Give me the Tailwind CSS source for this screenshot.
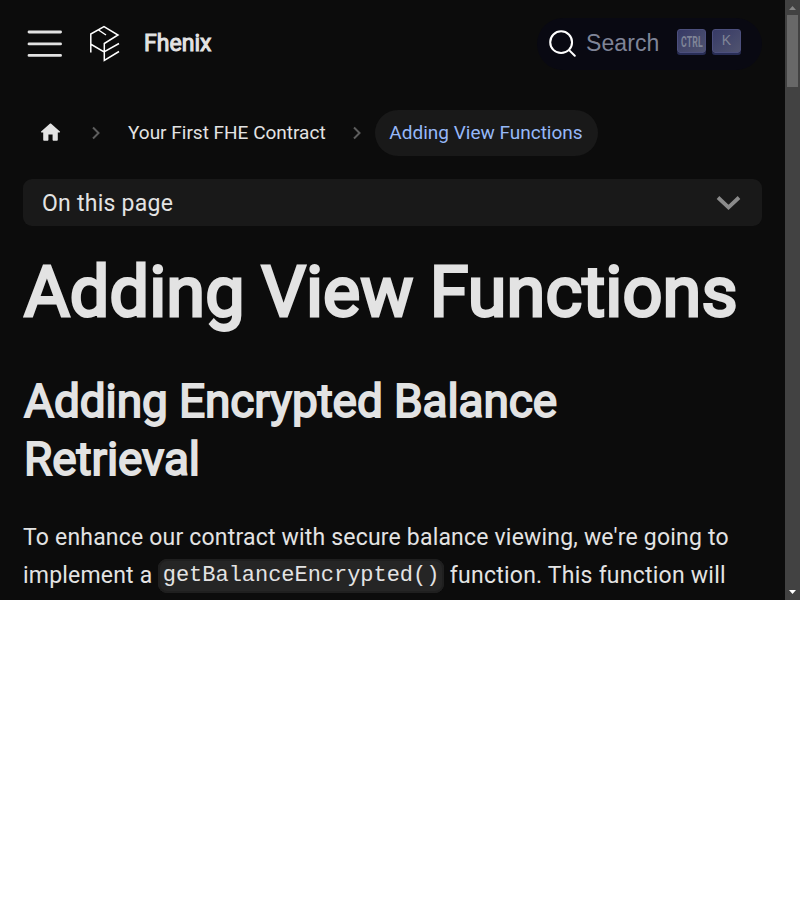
<!DOCTYPE html>
<html lang="en"><head><meta charset="utf-8"><title>Adding View Functions | Fhenix</title>
<script src="https://cdn.jsdelivr.net/npm/@tailwindcss/browser@4"></script></head>
<body class="bg-white font-[Roboto,sans-serif] text-[#e3e3e3]">
<div class="flex h-[600px] w-[800px] overflow-hidden bg-[#0c0c0c]">
 <div class="h-[600px] w-[785px] shrink-0 overflow-hidden">
  <nav class="flex h-[87px] items-center pl-[23px] pr-[23px]">
   <svg class="h-[43px] w-[43px] shrink-0" viewBox="0 0 30 30"><path stroke="#e3e3e3" stroke-linecap="round" stroke-miterlimit="10" stroke-width="2" d="M4.200 7h22M4.200 15.300h22M4.200 23.300h22"/></svg>
   <svg class="ml-[23px] h-[37px] w-[31px] shrink-0" viewBox="0 0 31 37" fill="none" stroke="#fff" stroke-width="1.5"><path d="M1.800 27.500V9L15 1.500L29 10L15.300 18.500V35.500L30 26.500M1.500 19L15 27L30 18.500M9.500 5L17 10"/></svg>
   <b class="ml-[24px] pt-[2px] text-[23px] font-normal tracking-[0.050px] [-webkit-text-stroke:1px_#e3e3e3]">Fhenix</b>
   <div class="ml-auto flex h-[52px] w-[225px] items-center rounded-full bg-[#090912] pl-[11px] font-['Liberation_Sans',sans-serif] text-[#7f8497]">
    <svg class="h-[29px] w-[29px]" viewBox="0 0 20 20" fill="none" stroke="#fff" stroke-width="1.4" stroke-linecap="round" stroke-linejoin="round"><path d="M14.386 14.386l4.088 4.088-4.088-4.088c-2.942 2.942-7.711 2.942-10.653 0s-2.942-7.711 0-10.653 7.711-2.942 10.653 0 2.942 7.711 0 10.653z"/></svg>
    <span class="ml-[9px] w-[73px] text-[23px] tracking-[0.1px]">Search</span>
    <span class="mb-[5px] ml-[18px] flex h-[24px] w-[29px] items-center justify-center rounded-[3px] border border-[#4c4f7d] bg-linear-to-br from-[#373a66] to-[#50536f] pt-[2px] shadow-[0_2px_0_#282d55]"><span class="inline-block scale-x-[0.58] font-[Roboto,sans-serif] text-[15px] leading-none font-bold tracking-[0.3px]">CTRL</span></span>
    <span class="mb-[5px] ml-[6px] flex h-[24px] w-[29px] items-center justify-center rounded-[3px] border border-[#4c4f7d] bg-linear-to-br from-[#373a66] to-[#50536f] pb-[1px] text-[14px] shadow-[0_2px_0_#282d55]">K</span>
   </div>
  </nav>
  <main class="px-[23px] pt-[23px]">
   <div class="flex h-[46px] items-center text-[19px]">
    <svg class="mb-[2px] ml-[15px] h-[25px] w-[25px]" viewBox="0 0 24 24"><path fill="#e3e3e3" d="M10 19v-5h4v5c0 .55.45 1 1 1h3c.55 0 1-.45 1-1v-7h1.700c.46 0 .68-.57.33-.87L12.670 3.600c-.38-.34-.96-.34-1.340 0l-8.360 7.530c-.34.3-.13.87.33.87H5v7c0 .55.45 1 1 1h3c.55 0 1-.45 1-1z"/></svg>
    <svg class="ml-[28px] h-[14px] w-[10px]" viewBox="0 0 10 14" fill="none" stroke="#5d5d5d" stroke-width="2"><path d="M2 1.500l5.500 5.500L2 12.500"/></svg>
    <span class="ml-[27px] w-[197px] whitespace-nowrap">Your First FHE Contract</span>
    <svg class="ml-[27px] h-[14px] w-[10px]" viewBox="0 0 10 14" fill="none" stroke="#5d5d5d" stroke-width="2"><path d="M2 1.500l5.500 5.500L2 12.500"/></svg>
    <span class="ml-auto mr-[164px] flex h-[46px] w-[223px] items-center justify-center whitespace-nowrap rounded-full bg-[#191919] pr-[1px] text-[#96b8f8]">Adding View Functions</span>
   </div>
   <div class="mt-[23px] flex h-[47px] items-center justify-between rounded-[9px] bg-[#191919] pl-[19px] pr-[21px] text-[23px] tracking-[0.25px]"><span class="pt-[3px]">On this page</span>
    <svg class="h-[16px] w-[25px]" viewBox="0 0 25 16" fill="none" stroke="#8b8b8b" stroke-width="3.800"><path d="M2 2.500l10.500 10L23 2.500"/></svg></div>
   <h1 class="mt-[23px] h-[87px] whitespace-nowrap pl-[1px] text-[70.200px] leading-[86px] font-normal [word-spacing:-1px] tracking-[0.080px] [-webkit-text-stroke:2.900px_#e3e3e3]">Adding View Functions</h1>
   <h2 class="mt-[36px] pl-[1px] text-[46px] leading-[58px] font-normal tracking-[-0.100px] [-webkit-text-stroke:1.800px_#e3e3e3]">Adding Encrypted Balance<br>Retrieval</h2>
   <p class="mt-[31px] whitespace-nowrap text-[23px] leading-[38px] tracking-[0.190px]">To enhance our contract with secure balance viewing, we're going to<br>implement a <code class="relative -top-[2px] rounded-[9px] border-[2px] border-[#1f1f1f] bg-[#252525] px-[2.500px] pt-[2px] pb-[3px] font-['Liberation_Mono',monospace] text-[22px] tracking-[-0.030px]">getBalanceEncrypted()</code> <span class="tracking-[0.240px]">function. This function will</span></p>
  </main>
 </div>
 <div class="flex h-[600px] w-[15px] shrink-0 flex-col items-center bg-[#424242]">
  <svg class="h-[15px] w-[15px]" viewBox="0 0 15 15"><path fill="#868686" d="M4 10L7.500 6L11 10z"/></svg>
  <div class="h-[72px] w-[11px] bg-[#686868]"></div>
  <svg class="mt-auto h-[15px] w-[15px]" viewBox="0 0 15 15"><path fill="#fff" d="M4 5L7.500 9L11 5z"/></svg>
 </div>
</div>
</body></html>
